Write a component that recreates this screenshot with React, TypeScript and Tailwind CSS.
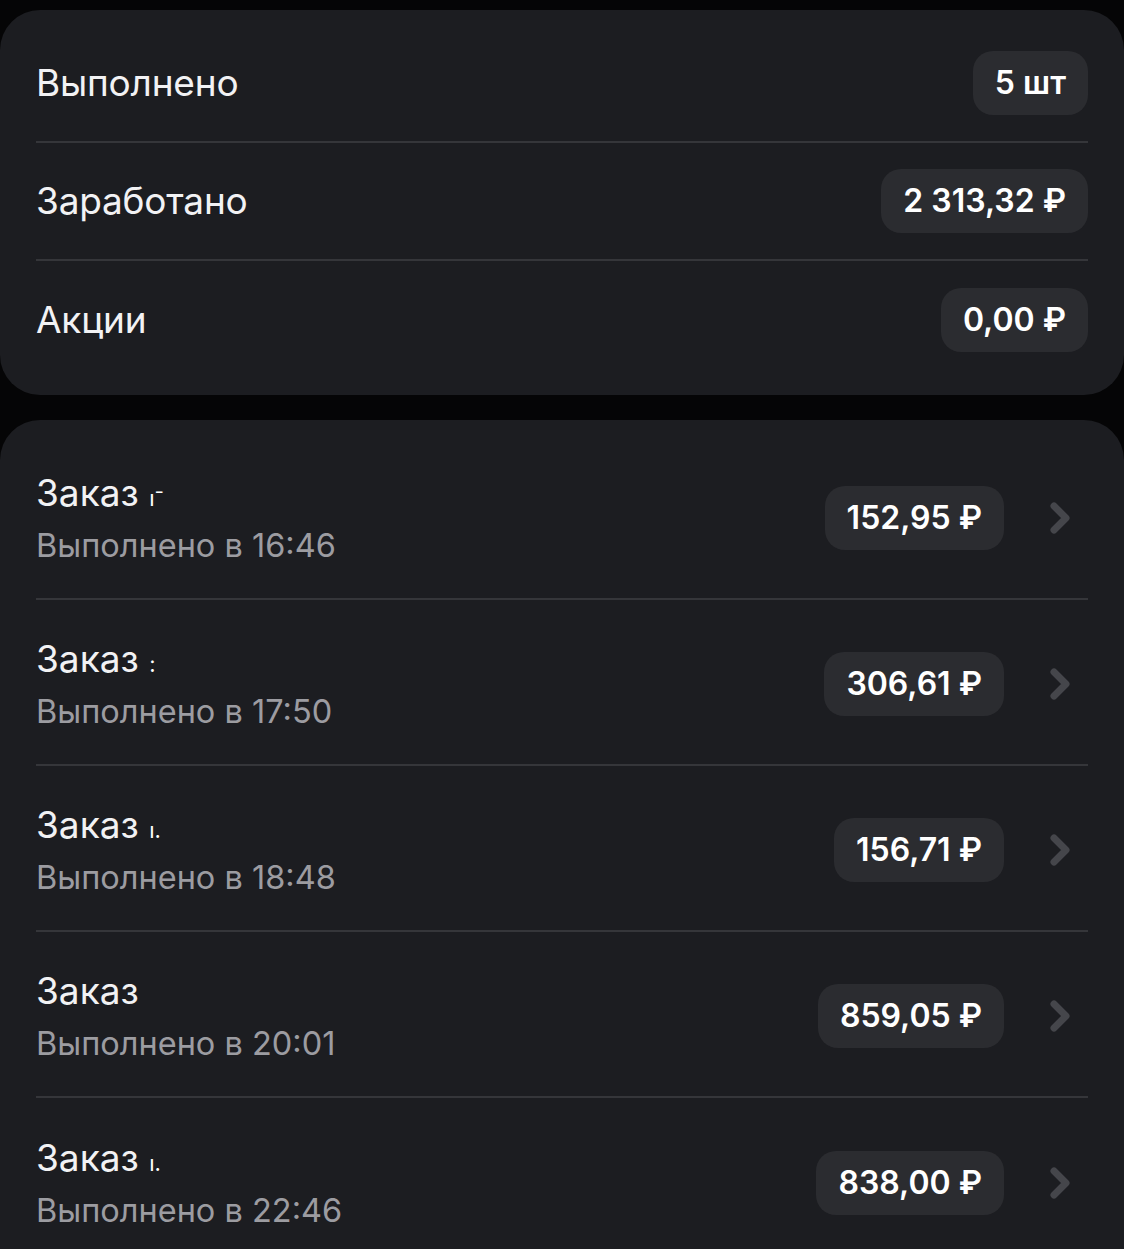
import React from "react";

const summary = [
  { label: "Выполнено", value: "5 шт" },
  { label: "Заработано", value: "2 313,32 ₽" },
  { label: "Акции", value: "0,00 ₽" },
];

const orders = [
  { frag: "ı⁻", time: "16:46", sum: "152,95 ₽" },
  { frag: ":", time: "17:50", sum: "306,61 ₽" },
  { frag: "ı.", time: "18:48", sum: "156,71 ₽" },
  { frag: "", time: "20:01", sum: "859,05 ₽" },
  { frag: "ı.", time: "22:46", sum: "838,00 ₽" },
];

function Chevron() {
  return (
    <svg width="24" height="34" viewBox="0 0 24 34" fill="none">
      <path d="M6 5 L18 17 L6 29" stroke="#45464b" strokeWidth="7" strokeLinecap="round" strokeLinejoin="round" />
    </svg>
  );
}

export default function App() {
  return (
    <div className="min-h-[1249px] bg-[#050506] pt-[10px] overflow-hidden" style={{ fontFamily: "Inter, 'Noto Sans', sans-serif" }}>
      <div className="bg-[#1c1d21] rounded-[40px] px-[36px] pt-[15px] pb-[16px]">
        {summary.map((r, i) => (
          <div
            key={r.label}
            className={`h-[118px] flex items-center justify-between ${i < summary.length - 1 ? "border-b-2 border-[#35363a]" : ""}`}
          >
            <span className="text-[37px] text-[#f2f2f4] tracking-[-0.2px]">{r.label}</span>
            <span className="h-[64px] px-[22px] rounded-[20px] bg-[#2b2c30] flex items-center text-[32px] font-semibold text-white">
              {r.value}
            </span>
          </div>
        ))}
      </div>
      <div className="mt-[25px] bg-[#1c1d21] rounded-t-[40px] px-[36px] pt-[14px] pb-[20px]">
        {orders.map((o, i) => (
          <div
            key={o.time}
            className={`h-[166px] flex items-center justify-between ${i < orders.length - 1 ? "border-b-2 border-[#35363a]" : ""}`}
          >
            <div className="flex flex-col gap-[6px] pt-[4px]">
              <span className="text-[37px] leading-[44px] text-[#f2f2f4]">
                Заказ <span className="text-[22px] text-white">{o.frag}</span>
              </span>
              <span className="text-[32.5px] leading-[40px] text-[#9c9ca1]">Выполнено в {o.time}</span>
            </div>
            <div className="flex items-center gap-[44px] pr-[16px] pt-[4px]">
              <span className="h-[64px] px-[22px] rounded-[20px] bg-[#2b2c30] flex items-center text-[32px] font-semibold text-white">
                {o.sum}
              </span>
              <Chevron />
            </div>
          </div>
        ))}
      </div>
    </div>
  );
}
